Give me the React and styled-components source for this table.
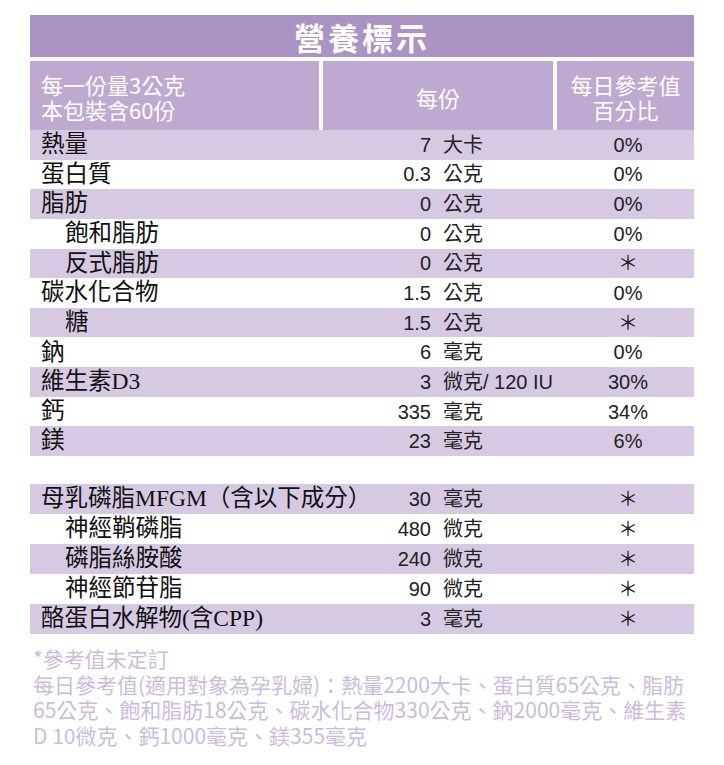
import React from 'react';
import styled, { createGlobalStyle } from 'styled-components';

const GlobalStyle = createGlobalStyle`
  body {
    margin: 0;
    background: #fff;
    font-family: "Noto Sans CJK TC", "Noto Sans", sans-serif;
  }
`;

const Page = styled.div`
  width: 664px;
  padding: 15px 30px 0 30px;
`;

const Title = styled.div`
  height: 42px;
  background: #ab93c3;
  color: #fff;
  font-size: 31px;
  font-weight: 700;
  letter-spacing: 3px;
  display: flex;
  align-items: center;
  justify-content: center;
  line-height: 1;
`;

const Header = styled.div`
  display: grid;
  grid-template-columns: 289px 230px 137px;
  column-gap: 4px;
  margin-top: 4px;
  height: 69px;
`;

const HeadCell = styled.div`
  background: #bea9d0;
  color: #fff;
  font-size: 22px;
  line-height: 26px;
  display: flex;
  flex-direction: column;
  justify-content: center;
  align-items: ${p => (p.$left ? 'flex-start' : 'center')};
  padding-left: ${p => (p.$left ? '11px' : '0')};
  padding-top: 3px;
  text-align: center;
`;

const HeadLine = styled.span`
  display: block;
  height: 25px;
  line-height: 25px;
`;

const Table = styled.div`
  display: flex;
  flex-direction: column;
  margin-top: ${p => p.$gap || 0}px;
`;

const Row = styled.div`
  display: grid;
  grid-template-columns: 289px 112px 122px 141px;
  align-items: center;
  height: ${p => p.$h}px;
  background: ${p => (p.$shade ? '#d6cae3' : '#fff')};
`;

const Label = styled.div`
  font-family: "Liberation Serif", "Noto Sans CJK TC", serif;
  font-size: 23.5px;
  color: #111;
  padding-left: ${p => (p.$indent ? 35 : 11)}px;
  white-space: nowrap;
  line-height: 1;
`;

const Amount = styled.div`
  font-family: "Liberation Sans", "Noto Sans CJK TC", sans-serif;
  font-size: 20px;
  color: #222;
  text-align: right;
  line-height: 1;
`;

const Unit = styled.div`
  font-family: "Liberation Sans", "Noto Sans CJK TC", sans-serif;
  font-size: 20px;
  color: #222;
  padding-left: 12px;
  white-space: nowrap;
  line-height: 1;
`;

const Percent = styled.div`
  font-family: "Liberation Sans", "Noto Sans CJK TC", sans-serif;
  font-size: 20px;
  color: #222;
  text-align: center;
  padding-left: 9px;
  line-height: 1;
`;

const Notes = styled.div`
  margin-top: 12px;
  padding-left: 3px;
  color: #cbbcdd;
  font-size: 21px;
  line-height: 25.7px;
  white-space: nowrap;
`;

const NoteLine = styled.div``;

const main = [
  ['熱量', '7', '大卡', '0%'],
  ['蛋白質', '0.3', '公克', '0%'],
  ['脂肪', '0', '公克', '0%'],
  ['飽和脂肪', '0', '公克', '0%', true],
  ['反式脂肪', '0', '公克', '*', true],
  ['碳水化合物', '1.5', '公克', '0%'],
  ['糖', '1.5', '公克', '*', true],
  ['鈉', '6', '毫克', '0%'],
  ['維生素D3', '3', '微克/ 120 IU', '30%'],
  ['鈣', '335', '毫克', '34%'],
  ['鎂', '23', '毫克', '6%'],
];

const extra = [
  ['母乳磷脂MFGM（含以下成分）', '30', '毫克', '*'],
  ['神經鞘磷脂', '480', '微克', '*', true],
  ['磷脂絲胺酸', '240', '微克', '*', true],
  ['神經節苷脂', '90', '微克', '*', true],
  ['酪蛋白水解物(含CPP)', '3', '毫克', '*'],
];

const Rows = ({ items, h }) =>
  items.map(([label, amount, unit, pct, indent], i) =>
    <Row key={label} $h={h} $shade={i % 2 === 0}>
      <Label $indent={indent}>{label}</Label>
      <Amount>{amount}</Amount>
      <Unit>{unit}</Unit>
      <Percent>{pct === '*' ? '＊' : pct}</Percent>
    </Row>
  );

export default function App() {
  return (
    <Page>
      <GlobalStyle />
      <Title>營養標示</Title>
      <Header>
        <HeadCell $left>
          <HeadLine>每一份量3公克</HeadLine>
          <HeadLine>本包裝含60份</HeadLine>
        </HeadCell>
        <HeadCell>每份</HeadCell>
        <HeadCell>
          <HeadLine>每日參考值</HeadLine>
          <HeadLine>百分比</HeadLine>
        </HeadCell>
      </Header>
      <Table>
        <Rows items={main} h={29.65} />
      </Table>
      <Table $gap={28}>
        <Rows items={extra} h={30} />
      </Table>
      <Notes>
        <NoteLine>*參考值未定訂</NoteLine>
        <NoteLine>每日參考值(適用對象為孕乳婦)：熱量2200大卡、蛋白質65公克、脂肪</NoteLine>
        <NoteLine>65公克、飽和脂肪18公克、碳水化合物330公克、鈉2000毫克、維生素</NoteLine>
        <NoteLine>D 10微克、鈣1000毫克、鎂355毫克</NoteLine>
      </Notes>
    </Page>
  );
}
